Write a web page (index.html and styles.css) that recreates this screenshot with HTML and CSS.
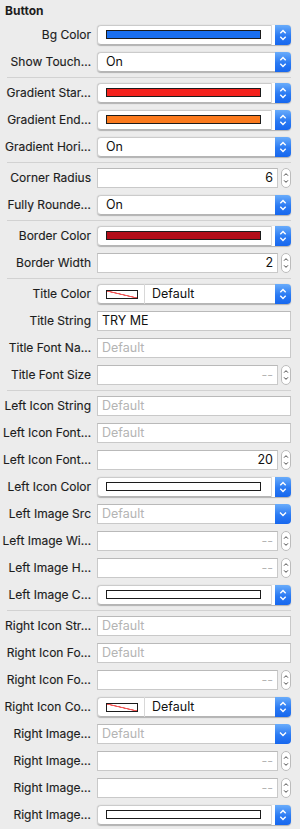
FILE: index.html
```html
<!DOCTYPE html>
<html lang="en">
<head>
    <meta charset="utf-8">
    <title>Attributes Inspector</title>
    <link rel="stylesheet" href="styles.css">
</head>
<body>
    <svg class="sprite" width="0" height="0">
        <symbol id="updown" viewBox="0 0 16 20">
            <polyline points="5.3,8.2 8,5.5 10.7,8.2" />
            <polyline points="5.3,11.8 8,14.5 10.7,11.8" />
        </symbol>
        <symbol id="down" viewBox="0 0 16 20">
            <polyline points="5,8.6 8,11.6 11,8.6" />
        </symbol>
        <symbol id="step" viewBox="0 0 10 20">
            <polyline points="2.6,7 5,4.6 7.4,7" />
            <polyline points="2.6,13 5,15.4 7.4,13" />
        </symbol>
    </svg>

    <div class="inspector">
        <h2 class="section-title">Button</h2>

        <div class="row">
            <span class="name">Bg Color</span>
            <div class="popup">
                <div class="well wide"><span class="swatch blue"></span></div>
                <span class="arrows"><svg><use href="#updown"/></svg></span>
            </div>
        </div>
        <div class="row">
            <span class="name">Show Touch…</span>
            <div class="popup">
                <div class="value">On</div>
                <span class="arrows"><svg><use href="#updown"/></svg></span>
            </div>
        </div>

        <div class="divider"></div>

        <div class="row">
            <span class="name">Gradient Star…</span>
            <div class="popup">
                <div class="well wide"><span class="swatch red"></span></div>
                <span class="arrows"><svg><use href="#updown"/></svg></span>
            </div>
        </div>
        <div class="row">
            <span class="name">Gradient End…</span>
            <div class="popup">
                <div class="well wide"><span class="swatch orange"></span></div>
                <span class="arrows"><svg><use href="#updown"/></svg></span>
            </div>
        </div>
        <div class="row">
            <span class="name">Gradient Hori…</span>
            <div class="popup">
                <div class="value">On</div>
                <span class="arrows"><svg><use href="#updown"/></svg></span>
            </div>
        </div>

        <div class="divider"></div>

        <div class="row">
            <span class="name">Corner Radius</span>
            <div class="field number">6</div>
            <span class="stepper"><svg><use href="#step"/></svg></span>
        </div>
        <div class="row">
            <span class="name">Fully Rounde…</span>
            <div class="popup">
                <div class="value">On</div>
                <span class="arrows"><svg><use href="#updown"/></svg></span>
            </div>
        </div>

        <div class="divider"></div>

        <div class="row">
            <span class="name">Border Color</span>
            <div class="popup">
                <div class="well wide"><span class="swatch darkred"></span></div>
                <span class="arrows"><svg><use href="#updown"/></svg></span>
            </div>
        </div>
        <div class="row">
            <span class="name">Border Width</span>
            <div class="field number">2</div>
            <span class="stepper"><svg><use href="#step"/></svg></span>
        </div>

        <div class="divider"></div>

        <div class="row">
            <span class="name">Title Color</span>
            <div class="popup">
                <div class="well"><span class="swatch none"></span></div>
                <div class="value">Default</div>
                <span class="arrows"><svg><use href="#updown"/></svg></span>
            </div>
        </div>
        <div class="row">
            <span class="name">Title String</span>
            <div class="field">TRY ME</div>
        </div>
        <div class="row">
            <span class="name">Title Font Na…</span>
            <div class="field placeholder">Default</div>
        </div>
        <div class="row">
            <span class="name">Title Font Size</span>
            <div class="field number placeholder">--</div>
            <span class="stepper"><svg><use href="#step"/></svg></span>
        </div>

        <div class="divider"></div>

        <div class="row">
            <span class="name">Left Icon String</span>
            <div class="field placeholder">Default</div>
        </div>
        <div class="row">
            <span class="name">Left Icon Font…</span>
            <div class="field placeholder">Default</div>
        </div>
        <div class="row">
            <span class="name">Left Icon Font…</span>
            <div class="field number">20</div>
            <span class="stepper"><svg><use href="#step"/></svg></span>
        </div>
        <div class="row">
            <span class="name">Left Icon Color</span>
            <div class="popup">
                <div class="well wide"><span class="swatch white"></span></div>
                <span class="arrows"><svg><use href="#updown"/></svg></span>
            </div>
        </div>
        <div class="row">
            <span class="name">Left Image Src</span>
            <div class="combo">
                <div class="field placeholder">Default</div>
                <span class="arrows"><svg><use href="#down"/></svg></span>
            </div>
        </div>
        <div class="row">
            <span class="name">Left Image Wi…</span>
            <div class="field number placeholder">--</div>
            <span class="stepper"><svg><use href="#step"/></svg></span>
        </div>
        <div class="row">
            <span class="name">Left Image H…</span>
            <div class="field number placeholder">--</div>
            <span class="stepper"><svg><use href="#step"/></svg></span>
        </div>
        <div class="row">
            <span class="name">Left Image C…</span>
            <div class="popup">
                <div class="well wide"><span class="swatch white"></span></div>
                <span class="arrows"><svg><use href="#updown"/></svg></span>
            </div>
        </div>

        <div class="divider"></div>

        <div class="row">
            <span class="name">Right Icon Str…</span>
            <div class="field placeholder">Default</div>
        </div>
        <div class="row">
            <span class="name">Right Icon Fo…</span>
            <div class="field placeholder">Default</div>
        </div>
        <div class="row">
            <span class="name">Right Icon Fo…</span>
            <div class="field number placeholder">--</div>
            <span class="stepper"><svg><use href="#step"/></svg></span>
        </div>
        <div class="row">
            <span class="name">Right Icon Co…</span>
            <div class="popup">
                <div class="well"><span class="swatch none"></span></div>
                <div class="value">Default</div>
                <span class="arrows"><svg><use href="#updown"/></svg></span>
            </div>
        </div>
        <div class="row">
            <span class="name">Right Image…</span>
            <div class="combo">
                <div class="field placeholder">Default</div>
                <span class="arrows"><svg><use href="#down"/></svg></span>
            </div>
        </div>
        <div class="row">
            <span class="name">Right Image…</span>
            <div class="field number placeholder">--</div>
            <span class="stepper"><svg><use href="#step"/></svg></span>
        </div>
        <div class="row">
            <span class="name">Right Image…</span>
            <div class="field number placeholder">--</div>
            <span class="stepper"><svg><use href="#step"/></svg></span>
        </div>
        <div class="row">
            <span class="name">Right Image…</span>
            <div class="popup">
                <div class="well wide"><span class="swatch white"></span></div>
                <span class="arrows"><svg><use href="#updown"/></svg></span>
            </div>
        </div>
    </div>
</body>
</html>
```
FILE: styles.css
```css
body {
    margin: 0;
    padding: 0;
    background-color: #ececec;
    color: #1d1d1d;
    font-family: Inter, "Liberation Sans", sans-serif;
}

.sprite {
    position: absolute;
}

.inspector {
    padding: 0 9px 0 0;
}

.section-title {
    margin: 0;
    padding: 3px 0 0 5px;
    height: 18px;
    font-size: 12px;
    font-weight: 700;
    line-height: 15px;
}

.row {
    display: flex;
    align-items: center;
    height: 27px;
}

.name {
    width: 91px;
    margin-right: 6px;
    flex: none;
    font-size: 12px;
    text-align: right;
    white-space: nowrap;
    -webkit-text-stroke: 0.15px #1d1d1d;
}

.divider {
    height: 1px;
    margin: 2px 0 1px 7px;
    background-color: #d2d2d2;
}

/* text fields */
.field {
    flex: 1;
    min-width: 0;
    height: 20px;
    box-sizing: border-box;
    padding: 0 4px;
    border: 1px solid #c9c9c9;
    border-top-color: #b9b9b9;
    background-color: #fff;
    font-size: 12.5px;
    line-height: 18px;
    color: #111;
}

.field.number {
    text-align: right;
}

.field.placeholder {
    color: #b4b4b4;
}

.stepper {
    flex: none;
    width: 10px;
    height: 20px;
    margin-left: 3px;
    box-sizing: border-box;
    border: 1px solid #bcbcbc;
    border-radius: 5px;
    background-color: #fff;
}

.stepper svg {
    display: block;
    width: 8px;
    height: 18px;
    fill: none;
    stroke: #333;
    stroke-width: 1.2;
}

/* pop up buttons */
.popup,
.combo {
    flex: 1;
    display: flex;
    height: 20px;
}

.popup {
    border-radius: 4px;
    box-shadow: 0 0.5px 1px rgba(0, 0, 0, 0.25);
}

.popup .value {
    flex: 1;
    box-sizing: border-box;
    padding-left: 8px;
    border: 1px solid #cbcbcb;
    border-right: none;
    border-bottom-color: #b5b5b5;
    border-radius: 4px 0 0 4px;
    background-color: #fff;
    font-size: 12.5px;
    line-height: 18px;
    color: #111;
}

.popup .well + .value {
    border-left: none;
    border-radius: 0;
    padding-left: 7px;
}

.well {
    display: flex;
    align-items: center;
    box-sizing: border-box;
    width: 48px;
    padding: 1px 6px 0 8px;
    border: 1px solid #cbcbcb;
    border-right-color: #d8d8d8;
    border-bottom-color: #b5b5b5;
    border-radius: 4px 0 0 4px;
    background-color: #fff;
}

.well.wide {
    flex: 1;
    width: auto;
    padding-top: 0;
    padding-right: 10px;
    margin-right: 3px;
    box-shadow: 3px 0 0 #fff;
}

.swatch {
    flex: 1;
    height: 7px;
    border: 1px solid #1c1c1c;
}

.swatch.blue {
    background-color: #1a6ff0;
}

.swatch.red {
    background-color: #f4211c;
}

.swatch.orange {
    background-color: #fb7a1e;
}

.swatch.darkred {
    background-color: #b30d19;
}

.swatch.white {
    background-color: #fff;
}

.swatch.none {
    background: #fff linear-gradient(to top right, transparent calc(50% - 0.9px), #f05858 calc(50% - 0.4px), #f05858 calc(50% + 0.4px), transparent calc(50% + 0.9px));
}

.arrows {
    flex: none;
    width: 16px;
    height: 20px;
    border-radius: 0 4px 4px 0;
    background: linear-gradient(#69acfb, #2a7af3 55%, #1767ee);
}

.arrows svg {
    display: block;
    width: 16px;
    height: 20px;
    fill: none;
    stroke: #fff;
    stroke-width: 1.4;
}

.combo .field {
    border-right: none;
}
```
